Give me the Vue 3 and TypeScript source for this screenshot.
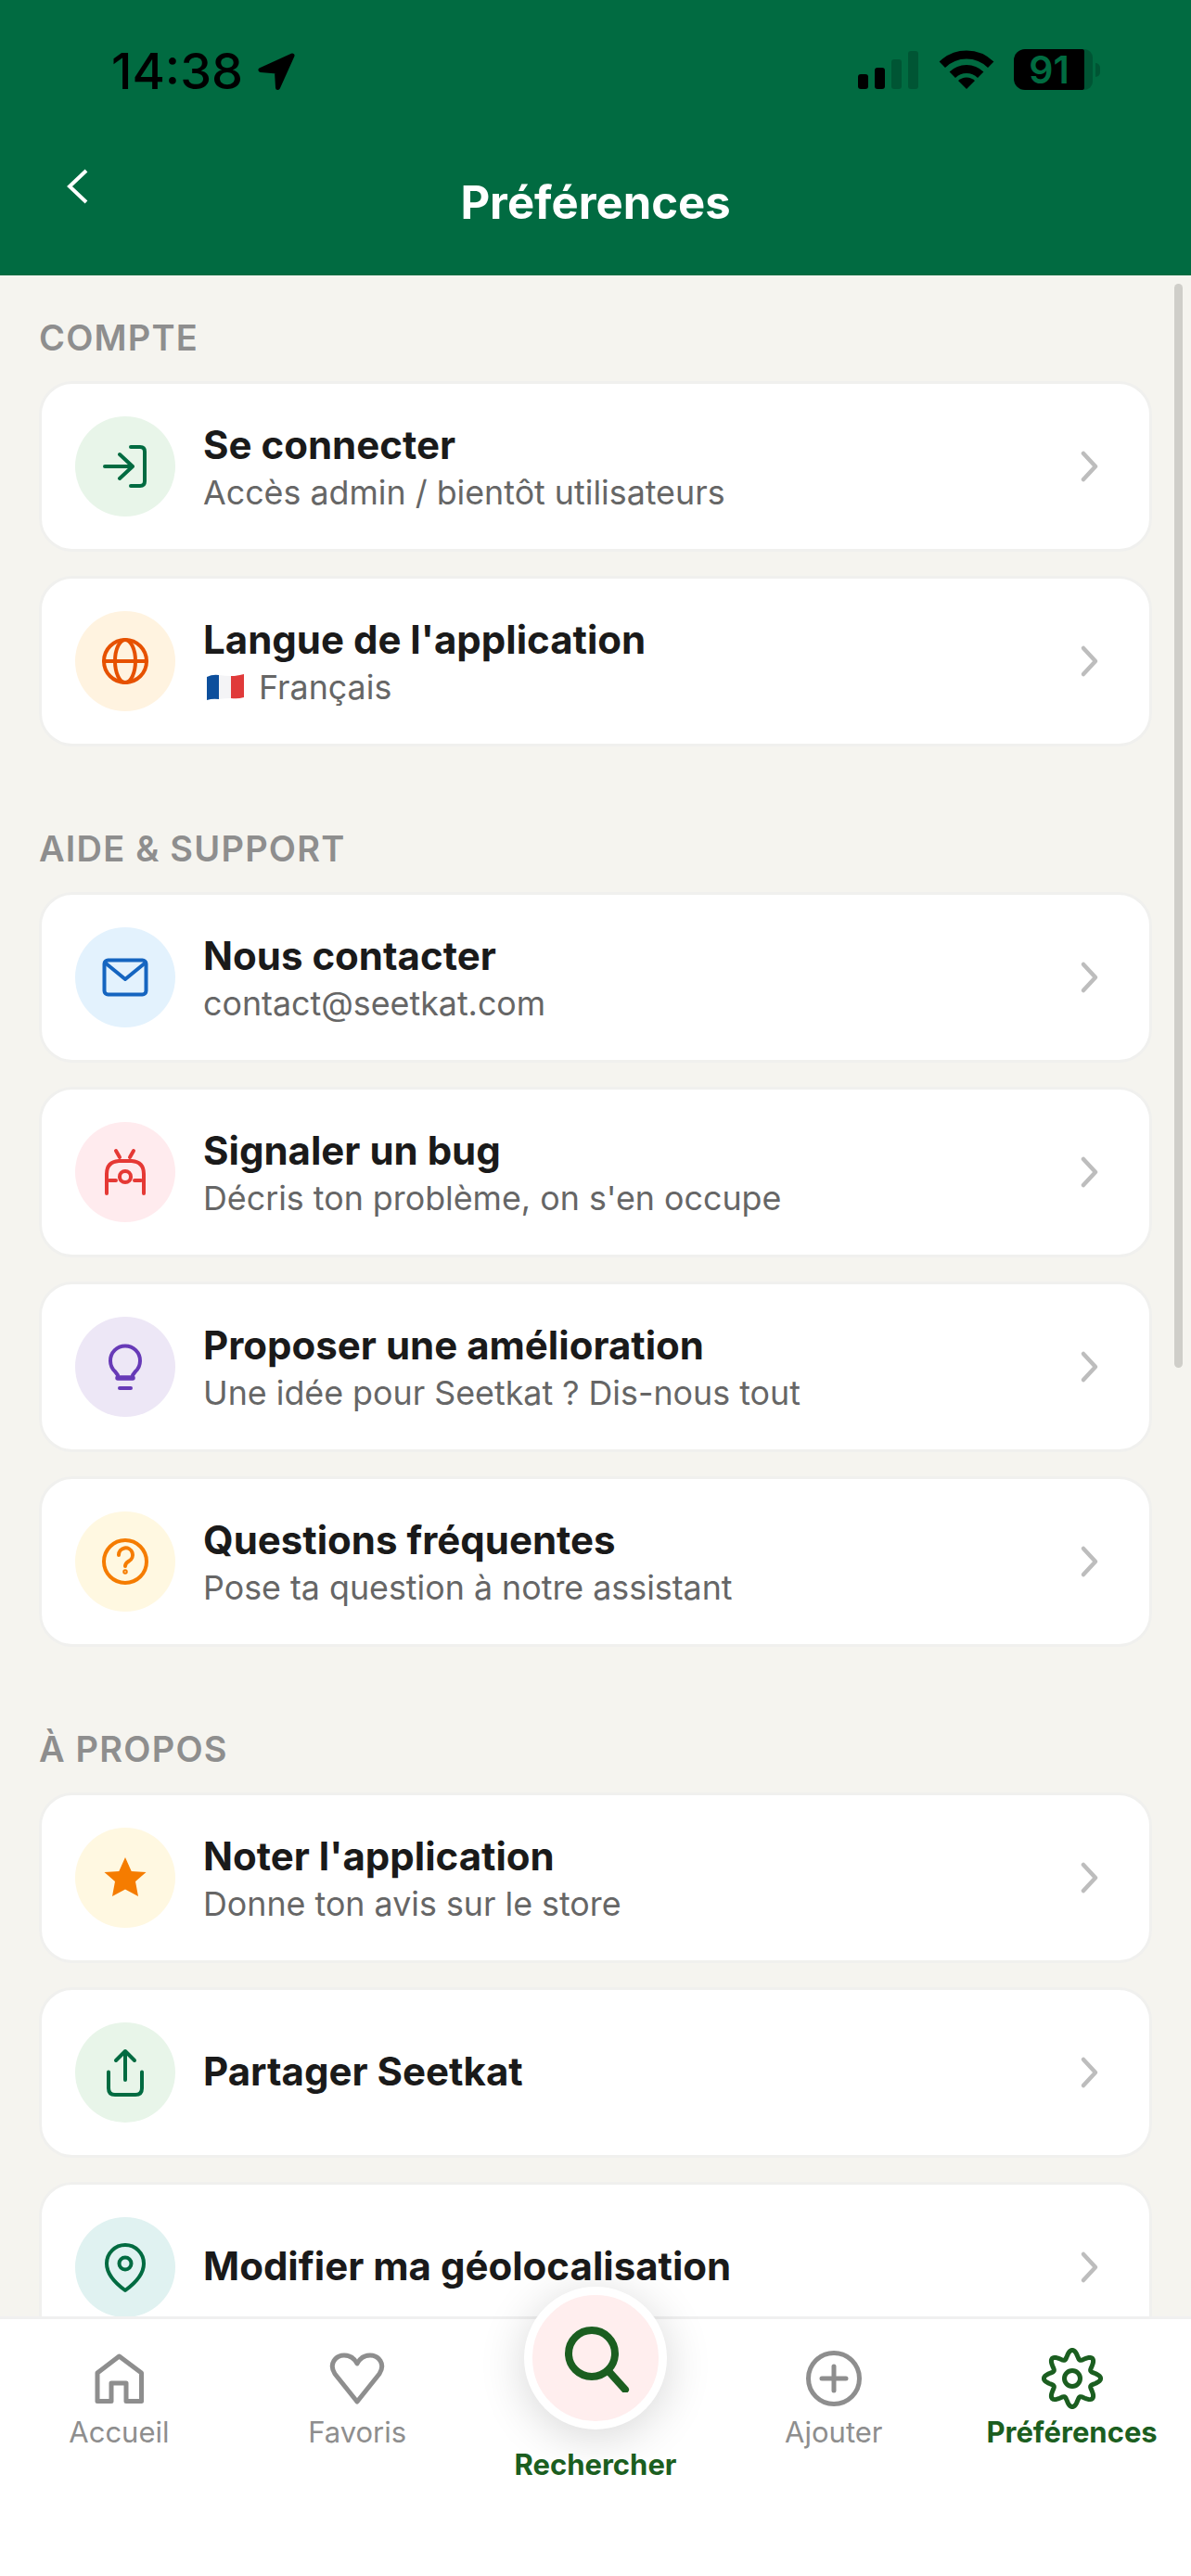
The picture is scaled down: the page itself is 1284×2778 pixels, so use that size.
<script setup lang="ts">
interface Row {
  title: string
  sub?: string
  flag?: boolean
  tone: string
  icon: string
}

interface Section {
  label: string
  rows: Row[]
}

const icons: Record<string, string> = {
  login: '<path d="M32 54H62M48 41L62 54L48 67"/><path d="M60 33H70Q75 33 75 38V70Q75 75 70 75H60"/>',
  globe: '<circle cx="54" cy="54" r="23"/><ellipse cx="54" cy="54" rx="11" ry="23"/><path d="M31 54H77"/>',
  mail: '<rect x="31.5" y="35.500" width="45" height="37" rx="4"/><path d="M32 38L54 56L76 38"/>',
  bug: '<path d="M44 31L48 38M63 31L59 38"/><path d="M34 77V56Q34 43 47 42H61Q74 43 74 56V77"/><circle cx="54" cy="59" r="6"/><path d="M37 63H44M64 63H71"/>',
  bulb: '<path d="M46 63L43 59A16 16 0 1 1 65 59L62 63"/><path d="M46 66H62" stroke-width="5.500"/><path d="M48 77H60"/>',
  help: '<circle cx="54" cy="54" r="23"/><path d="M47 47A7.500 7.500 0 1 1 58 53.500C55.500 55 54 56 54 59"/><circle cx="54" cy="65" r="1" stroke-width="3.500"/>',
  star: '<path class="solid" d="M54 32L60.700 47L76.500 48L65 58L68 74L54 66.500L40 74L43 58L31.500 48L47.300 47Z"/>',
  share: '<path d="M54 62V31M44 41L54 31L64 41"/><path d="M36 53.500V71Q36 78 43 78H65Q72 78 72 71V53.500"/>',
  pin: '<path d="M54 79C43 71 34 62 34 50A20 20 0 0 1 74 50C74 62 65 71 54 79Z"/><circle cx="54" cy="50" r="6.500"/>'
}

const sections: Section[] = [
  {
    label: 'COMPTE',
    rows: [
      { title: 'Se connecter', sub: 'Accès admin / bientôt utilisateurs', tone: 'green', icon: 'login' },
      { title: "Langue de l'application", sub: 'Français', flag: true, tone: 'orange', icon: 'globe' }
    ]
  },
  {
    label: 'AIDE & SUPPORT',
    rows: [
      { title: 'Nous contacter', sub: 'contact@seetkat.com', tone: 'blue', icon: 'mail' },
      { title: 'Signaler un bug', sub: "Décris ton problème, on s'en occupe", tone: 'red', icon: 'bug' },
      { title: 'Proposer une amélioration', sub: 'Une idée pour Seetkat ? Dis-nous tout', tone: 'purple', icon: 'bulb' },
      { title: 'Questions fréquentes', sub: 'Pose ta question à notre assistant', tone: 'amber', icon: 'help' }
    ]
  },
  {
    label: 'À PROPOS',
    rows: [
      { title: "Noter l'application", sub: 'Donne ton avis sur le store', tone: 'amber', icon: 'star' },
      { title: 'Partager Seetkat', tone: 'green', icon: 'share' },
      { title: 'Modifier ma géolocalisation', tone: 'teal', icon: 'pin' }
    ]
  }
]

// gear outline: 8 soft lobes around the centre
const gearPath = Array.from({ length: 144 }, (_, i) => {
  const a = (i / 144) * Math.PI * 2
  const r = 26 + 4.6 * Math.cos(8 * a)
  const x = 33 + r * Math.sin(a)
  const y = 33 - r * Math.cos(a)
  return `${i ? 'L' : 'M'}${x.toFixed(2)} ${y.toFixed(2)}`
}).join('') + 'Z'
</script>

<template>
  <div class="screen">
    <header class="header">
      <div class="status">
        <div class="status-left">
          <span class="time">14:38</span>
          <svg class="arrow" width="42" height="42" viewBox="0 0 42 42">
            <path d="M39 4L5 19.500L22.500 21L23.500 38.500Z" fill="#000" stroke="#000" stroke-width="5" stroke-linejoin="round" />
          </svg>
        </div>
        <div class="status-right">
          <div class="signal">
            <i class="bar b1"></i>
            <i class="bar b2"></i>
            <i class="bar b3 off"></i>
            <i class="bar b4 off"></i>
          </div>
          <svg width="60" height="44" viewBox="0 0 60 44" fill="none" stroke="#000" stroke-width="9">
            <path d="M3.800 16.800A37 37 0 0 1 56.200 16.800" />
            <path d="M14.800 27.800A21.500 21.500 0 0 1 45.200 27.800" />
            <path d="M30 43L21 34A13 13 0 0 1 39 34Z" fill="#000" stroke="none" />
          </svg>
          <div class="battery">
            <div class="battery-body"><span>91</span></div>
            <i class="battery-rest"></i>
            <i class="battery-nub"></i>
          </div>
        </div>
      </div>
      <div class="nav">
        <svg class="back" width="28" height="40" viewBox="0 0 28 40" fill="none" stroke="#fff" stroke-width="4">
          <path d="M24 3L6 20L24 37" />
        </svg>
        <h1 class="page-title">Préférences</h1>
      </div>
    </header>

    <main class="content">
      <i class="scrollbar"></i>
      <section v-for="section in sections" :key="section.label" class="section">
        <h2 class="section-label">{{ section.label }}</h2>
        <div class="card-list">
          <div v-for="row in section.rows" :key="row.title" class="card">
            <div class="badge" :class="`tone-${row.tone}`">
              <svg width="108" height="108" viewBox="0 0 108 108" class="badge-icon" v-html="icons[row.icon]"></svg>
            </div>
            <div class="card-text">
              <div class="card-title">{{ row.title }}</div>
              <div v-if="row.sub" class="card-sub">
                <svg v-if="row.flag" class="flag" width="41" height="30" viewBox="0 0 41 30">
                  <path d="M1 4Q7 1 14 2V28Q7 27 1 29Z" fill="#0d4f9c" />
                  <path d="M14 2Q20 3 27 3V27Q20 27 14 28Z" fill="#f4f4f6" />
                  <path d="M27 3Q34 3 41 1V26Q34 28 27 27Z" fill="#e03a3a" />
                </svg>
                {{ row.sub }}
              </div>
            </div>
            <svg class="chevron" width="22" height="36" viewBox="0 0 22 36" fill="none" stroke="#bdbdbd" stroke-width="4.500" stroke-linecap="round" stroke-linejoin="round">
              <path d="M4 4L17 18L4 32" />
            </svg>
          </div>
        </div>
      </section>
    </main>

    <nav class="tabbar">
      <div class="tab">
        <svg class="tab-icon" width="66" height="66" viewBox="0 0 66 66">
          <path d="M33.500 9L57.500 27V57.500H41V38H25V57.500H10V27Z" />
        </svg>
        <span class="tab-label">Accueil</span>
      </div>
      <div class="tab">
        <svg class="tab-icon" width="66" height="66" viewBox="0 0 66 66">
          <path d="M33 58L9 28C2 17 10 8 19 8C25 8 30 11 33 17C36 11 41 8 47 8C56 8 64 17 57 28Z" />
        </svg>
        <span class="tab-label">Favoris</span>
      </div>
      <div class="tab tab-center">
        <div class="fab">
          <svg width="72" height="72" viewBox="0 0 72 72" fill="none" stroke="#1b5e20" stroke-width="8" stroke-linecap="round">
            <circle cx="30" cy="30" r="25" />
            <path d="M48 49L66 69" />
          </svg>
        </div>
        <span class="tab-label active">Rechercher</span>
      </div>
      <div class="tab">
        <svg class="tab-icon" width="66" height="66" viewBox="0 0 66 66">
          <circle cx="33" cy="33" r="27.500" />
          <path d="M20 33H46M33 20V46" />
        </svg>
        <span class="tab-label">Ajouter</span>
      </div>
      <div class="tab">
        <svg class="tab-icon on" width="66" height="66" viewBox="0 0 66 66">
          <path :d="gearPath" />
          <circle cx="33" cy="33" r="8.500" />
        </svg>
        <span class="tab-label active">Préférences</span>
      </div>
    </nav>
  </div>
</template>

<style scoped>
.screen {
  width: 1284px;
  height: 2778px;
  display: flex;
  flex-direction: column;
  overflow: hidden;
  background: #f5f4ef;
  font-family: Inter, "Liberation Sans", sans-serif;
}

.header {
  flex: none;
  height: 297px;
  background: #016b41;
  color: #fff;
}

.status {
  height: 150px;
  padding: 50px 98px 0 120px;
  box-sizing: border-box;
  display: flex;
  justify-content: space-between;
  align-items: flex-start;
}

.status-left {
  display: flex;
  align-items: center;
  gap: 14px;
}

.time {
  font-size: 54px;
  line-height: 54px;
  font-weight: 500;
  color: #000;
}

.status-right {
  display: flex;
  align-items: flex-end;
  gap: 21.5px;
  padding-top: 3px;
}

.signal {
  display: flex;
  align-items: flex-end;
  gap: 7px;
  margin-bottom: 1px;
}

.bar {
  display: block;
  width: 11px;
  border-radius: 3px;
  background: #000;
}

.bar.off {
  opacity: 0.2;
}

.b1 { height: 16px; }
.b2 { height: 23px; }
.b3 { height: 32px; }
.b4 { height: 41px; }

.battery {
  display: flex;
  align-items: center;
  height: 44px;
}

.battery-body {
  width: 76px;
  height: 44px;
  background: #000;
  border-radius: 12px 2px 2px 12px;
  display: flex;
  align-items: center;
  justify-content: center;
  color: #016b41;
  font-size: 41px;
  font-weight: 600;
}

.battery-rest {
  display: block;
  width: 9px;
  height: 44px;
  background: rgba(0, 0, 0, 0.2);
  border-radius: 0 10px 10px 0;
}

.battery-nub {
  display: block;
  width: 5px;
  height: 15px;
  margin-left: 3px;
  background: rgba(0, 0, 0, 0.2);
  border-radius: 0 5px 5px 0;
}

.nav {
  display: grid;
  grid-template-columns: 1fr auto 1fr;
  align-items: start;
}

.back {
  margin: 31px 0 0 69px;
}

.page-title {
  margin: 44px 0 0;
  font-size: 49px;
  line-height: 50px;
  font-weight: 700;
  text-align: center;
}

.content {
  flex: 1;
  min-height: 0;
  position: relative;
  overflow: hidden;
  padding: 45px 42px 0;
}

.scrollbar {
  position: absolute;
  top: 9px;
  right: 9px;
  width: 9px;
  height: 1169px;
  border-radius: 5px;
  background: #cfcec9;
}

.section {
  margin-bottom: 88px;
}

.section-label {
  margin: 0 0 25px;
  font-size: 38px;
  line-height: 44px;
  font-weight: 600;
  color: #8e8e8e;
  letter-spacing: 1.2px;
}

.card-list {
  display: flex;
  flex-direction: column;
  gap: 26px;
}

.card {
  height: 184px;
  box-sizing: border-box;
  display: flex;
  align-items: center;
  padding: 0 53px 0 36px;
  background: #fff;
  border: 3px solid #f0f0ee;
  border-radius: 36px;
}

.badge {
  flex: none;
  width: 108px;
  height: 108px;
  border-radius: 50%;
}

.badge-icon {
  display: block;
  fill: none;
  stroke: currentColor;
  stroke-width: 4;
  stroke-linecap: round;
  stroke-linejoin: round;
}

.badge-icon :deep(.solid) {
  fill: currentColor;
  stroke: none;
}

.tone-green { background: #e8f5e9; color: #016b41; }
.tone-orange { background: #fff3e0; color: #e65100; }
.tone-blue { background: #e3f2fd; color: #1565c0; }
.tone-red { background: #ffebee; color: #e53935; }
.tone-purple { background: #ede7f6; color: #673ab7; }
.tone-amber { background: #fff8e1; color: #f57c00; }
.tone-teal { background: #e0f2f1; color: #016b41; }

.card-text {
  flex: 1;
  min-width: 0;
  padding: 0 0 3px 30px;
}

.card-title {
  font-size: 42px;
  line-height: 55px;
  font-weight: 700;
  color: #1a1a1a;
}

.card-sub {
  margin-top: 4px;
  font-size: 35.8px;
  line-height: 40px;
  color: #666;
  display: flex;
  align-items: center;
}

.flag {
  margin-right: 16px;
  margin-left: 3px;
}

.chevron {
  flex: none;
}

.tabbar {
  flex: none;
  position: relative;
  height: 280px;
  box-sizing: border-box;
  display: grid;
  grid-template-columns: repeat(5, 1fr);
  background: #fff;
  border-top: 3px solid #f0f0f0;
}

.tab {
  display: flex;
  flex-direction: column;
  align-items: center;
  padding-top: 31px;
}

.tab-icon {
  fill: none;
  stroke: #8e8e8e;
  stroke-width: 5;
  stroke-linecap: round;
  stroke-linejoin: round;
}

.tab-icon.on {
  stroke: #1b5e20;
}

.tab-label {
  margin-top: 6px;
  font-size: 31px;
  line-height: 38px;
  font-weight: 400;
  color: #8e8e8e;
  white-space: nowrap;
}

.tab-label.active {
  font-weight: 700;
  color: #1b5e20;
}

.tab-center {
  padding-top: 0;
  margin-top: -35px;
}

.tab-center .tab-label {
  margin-top: 19px;
}

.fab {
  width: 154px;
  height: 154px;
  box-sizing: border-box;
  display: flex;
  align-items: center;
  justify-content: center;
  background: #ffeeee;
  border: 9px solid #fff;
  border-radius: 50%;
  box-shadow: 0 8px 50px rgba(0, 0, 0, 0.16);
}

.fab svg {
  margin: 2px 0 0 4px;
}
</style>
